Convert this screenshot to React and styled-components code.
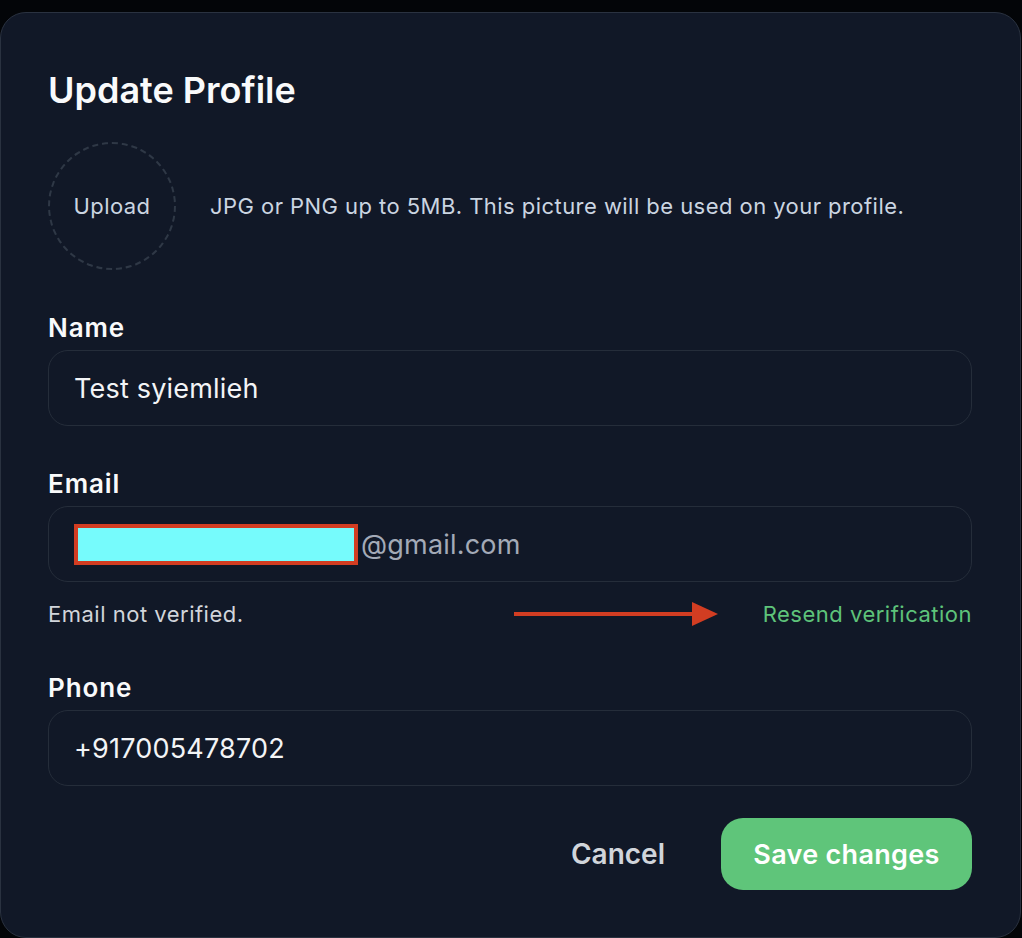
import React from 'react';
import styled, { createGlobalStyle } from 'styled-components';

const GlobalStyle = createGlobalStyle`
  html, body {
    margin: 0;
    padding: 0;
    background: #030508;
  }
  body {
    font-family: Inter, "Noto Sans", sans-serif;
  }
`;

const Page = styled.div`
  padding-top: 12px;
  height: 926px;
  overflow: hidden;
`;

const Card = styled.div`
  box-sizing: border-box;
  width: 1021px;
  height: 926px;
  background: #111827;
  border: 1px solid #2a3240;
  border-radius: 26px;
  padding: 57px 48px 47px 47px;
  display: flex;
  flex-direction: column;
`;

const Title = styled.h1`
  margin: 0;
  font-size: 36px;
  line-height: 40px;
  font-weight: 600;
  color: #f9fafb;
  letter-spacing: 0;
`;

const UploadRow = styled.div`
  display: flex;
  align-items: center;
  gap: 34px;
  margin-top: 32px;
`;

const Avatar = styled.button`
  box-sizing: border-box;
  width: 128px;
  height: 128px;
  border-radius: 50%;
  border: 2px dashed #2f3846;
  background: transparent;
  color: #cbd5e1;
  font-family: inherit;
  font-size: 22px;
  letter-spacing: 0.4px;
  padding: 0;
  flex-shrink: 0;
`;

const Hint = styled.p`
  margin: 0;
  font-size: 22px;
  letter-spacing: 0.45px;
  color: #cbd5e1;
`;

const Field = styled.div`
  display: flex;
  flex-direction: column;
  margin-top: ${(p) => p.$top}px;
`;

const Label = styled.label`
  font-size: 26px;
  line-height: 30px;
  font-weight: 600;
  letter-spacing: 0.9px;
  color: #f9fafb;
  margin-bottom: 7px;
`;

const InputBox = styled.div`
  box-sizing: border-box;
  height: 76px;
  border: 1.5px solid #252d3a;
  border-radius: 20px;
  display: flex;
  align-items: center;
  padding: 0 25px;
  font-size: 27px;
  letter-spacing: 0.2px;
  color: #f3f4f6;
`;

const Redacted = styled.span`
  box-sizing: border-box;
  width: 284px;
  height: 41px;
  background: #76fbfc;
  border: 4px solid #d23d22;
  margin-right: 3px;
`;

const Domain = styled.span`
  color: #a3aab7;
`;

const VerifyRow = styled.div`
  display: flex;
  align-items: center;
  margin-top: 18px;
  font-size: 22px;
  letter-spacing: 0.5px;
  line-height: 28px;
`;

const Muted = styled.span`
  color: #d1d5db;
`;

const Arrow = styled.svg`
  margin-left: auto;
  margin-right: 45px;
`;

const Link = styled.a`
  color: #5ec37a;
`;

const Actions = styled.div`
  display: flex;
  justify-content: flex-end;
  align-items: center;
  gap: 28px;
  margin-top: 32px;
`;

const GhostButton = styled.button`
  background: transparent;
  border: none;
  color: #d1d5db;
  font-family: inherit;
  font-size: 28px;
  font-weight: 600;
  padding: 0 28px;
  height: 72px;
`;

const PrimaryButton = styled.button`
  background: #5fc57a;
  border: none;
  border-radius: 22px;
  color: #ffffff;
  font-family: inherit;
  font-size: 27px;
  letter-spacing: 0.3px;
  font-weight: 600;
  height: 72px;
  width: 251px;
  padding: 0;
`;

export default function App() {
  return (
    <Page>
      <GlobalStyle />
      <Card>
        <Title>Update Profile</Title>
        <UploadRow>
          <Avatar>Upload</Avatar>
          <Hint>JPG or PNG up to 5MB. This picture will be used on your profile.</Hint>
        </UploadRow>

        <Field $top={43}>
          <Label>Name</Label>
          <InputBox>Test syiemlieh</InputBox>
        </Field>

        <Field $top={43}>
          <Label>Email</Label>
          <InputBox>
            <Redacted />
            <Domain>@gmail.com</Domain>
          </InputBox>
        </Field>

        <VerifyRow>
          <Muted>Email not verified.</Muted>
          <Arrow width="204" height="26" viewBox="0 0 204 26">
            <rect x="0" y="11" width="180" height="4" fill="#d23d22" />
            <polygon points="178,1 204,13 178,25" fill="#d23d22" />
          </Arrow>
          <Link>Resend verification</Link>
        </VerifyRow>

        <Field $top={45}>
          <Label>Phone</Label>
          <InputBox>+917005478702</InputBox>
        </Field>

        <Actions>
          <GhostButton>Cancel</GhostButton>
          <PrimaryButton>Save changes</PrimaryButton>
        </Actions>
      </Card>
    </Page>
  );
}
